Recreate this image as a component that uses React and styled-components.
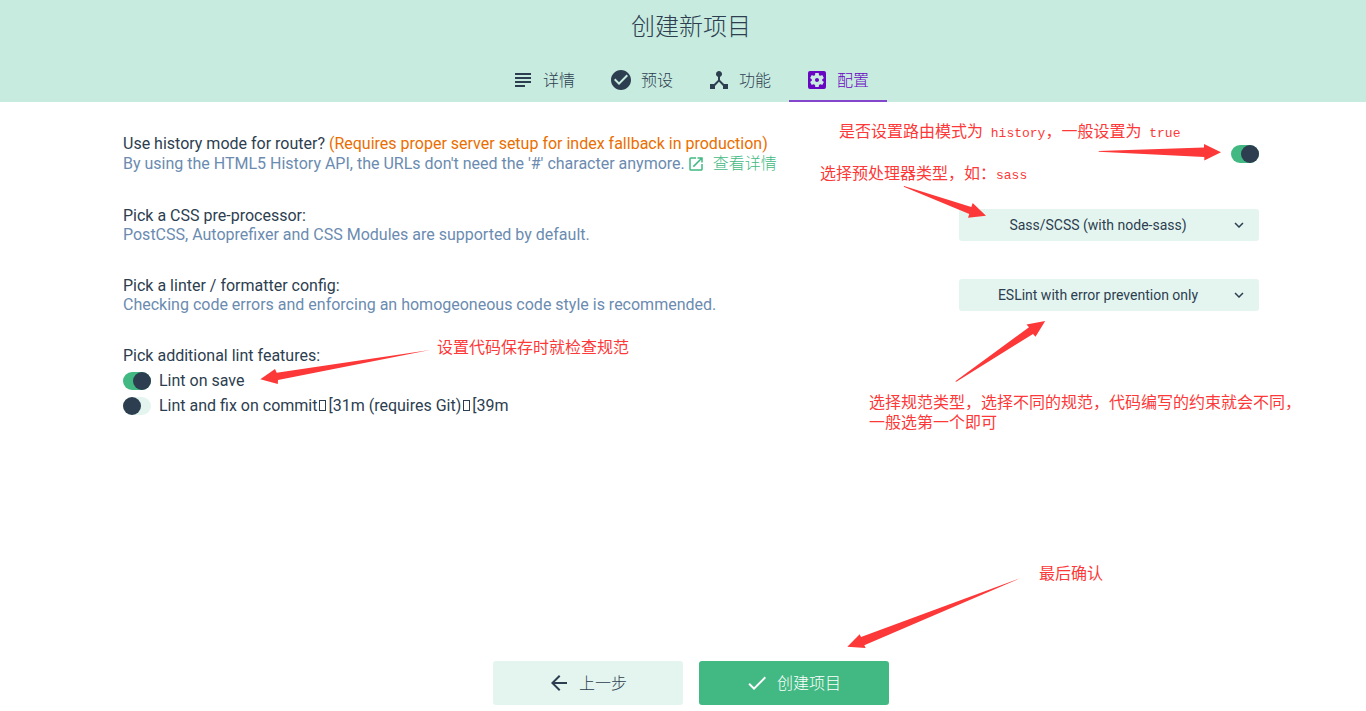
import React, { useState } from "react";
import styled, { createGlobalStyle, css } from "styled-components";
import {
  MdSubject,
  MdCheckCircle,
  MdDeviceHub,
  MdSettingsApplications,
  MdOpenInNew,
  MdKeyboardArrowDown,
  MdArrowBack,
  MdCheck,
} from "react-icons/md";

const color = {
  dark: "#2c3e50",
  green: "#42b983",
  header: "#c8ebdf",
  light: "#e4f5ef",
  blue: "#6b8bb0",
  orange: "#ea6e00",
  purple: "#6806c1",
  underline: "#8447cc",
  red: "#fd3838",
};

const GlobalStyle = createGlobalStyle`
  * { box-sizing: border-box; }
  body {
    margin: 0;
    background: #fff;
    color: ${color.dark};
    font: 400 16px/19px Roboto, "Noto Sans CJK SC", sans-serif;
  }
`;

const Page = styled.div`
  min-height: 100vh;
  display: flex;
  flex-direction: column;
`;

const Header = styled.header`
  background: ${color.header};
  padding-left: 16px;
  display: flex;
  flex-direction: column;
  align-items: center;
`;

const Title = styled.h1`
  margin: 0 0 4px;
  font-size: 24px;
  font-weight: 300;
  line-height: 54px;
`;

const Tabs = styled.nav`
  display: flex;
`;

const Tab = styled.button`
  display: flex;
  align-items: center;
  gap: 8px;
  min-width: 98px;
  height: 44px;
  padding: 0 16px;
  border: 0;
  background: none;
  font: inherit;
  font-weight: 300;
  color: ${color.dark};
  cursor: pointer;

  ${(p) =>
    p.$active &&
    css`
      color: ${color.purple};
      box-shadow: inset 0 -2px ${color.underline};
    `}
`;

const Content = styled.main`
  flex: 1;
  width: 100%;
  padding: 16px 107px 16px 123px;
`;

const Row = styled.section`
  position: relative;
  display: flex;
  align-items: center;
  justify-content: space-between;
  padding: 16px 0;
`;

const Prompt = styled.label`
  display: block;
`;

const Warning = styled.span`
  color: ${color.orange};
`;

const Description = styled.div`
  display: flex;
  align-items: center;
  color: ${color.blue};
`;

const MoreLink = styled.a`
  display: inline-flex;
  align-items: center;
  gap: 8px;
  margin-left: 2px;
  line-height: 21px;
  font-weight: 300;
  color: ${color.green};
  text-decoration: none;
`;

const Switch = styled.input.attrs({ type: "checkbox", role: "switch" })`
  appearance: none;
  flex: none;
  display: flex;
  width: 28px;
  height: 18px;
  margin: 0;
  border-radius: 9px;
  background: ${color.light};
  cursor: pointer;

  &::before {
    content: "";
    width: 18px;
    height: 18px;
    border-radius: 50%;
    background: ${color.dark};
  }

  &:checked {
    justify-content: flex-end;
    background: ${color.green};
  }
`;

const SelectBox = styled.div`
  display: grid;
  align-items: center;
  width: 300px;

  > * {
    grid-area: 1 / 1;
  }

  > svg {
    justify-self: end;
    margin-right: 11px;
    pointer-events: none;
  }
`;

const Select = styled.select`
  appearance: none;
  width: 100%;
  height: 32px;
  padding: 0 32px 0 10px;
  border: 0;
  border-radius: 3px;
  background: ${color.light};
  color: ${color.dark};
  font: 400 14px/32px Roboto, sans-serif;
  text-align: center;
  text-align-last: center;
`;

const Features = styled.fieldset`
  position: relative;
  margin: 0;
  padding: 16px 0;
  border: 0;
`;

const FeaturesTitle = styled.div`
  margin-bottom: 6px;
`;

const Feature = styled.label`
  display: flex;
  align-items: center;
  gap: 8px;
  width: max-content;
  margin-bottom: 6px;
`;

const Tofu = styled.span`
  display: inline-block;
  width: 7px;
  height: 11px;
  margin: 0 2px;
  border: 1px solid ${color.dark};
`;

const Footer = styled.footer`
  display: flex;
  justify-content: center;
  padding: 0 0 6px 16px;
`;

const Actions = styled.div`
  position: relative;
  display: flex;
  gap: 16px;
`;

const Action = styled.button`
  display: flex;
  align-items: center;
  justify-content: center;
  gap: 8px;
  width: 190px;
  height: 44px;
  padding: 0 8px 0 6px;
  border: 0;
  border-radius: 3px;
  font: inherit;
  font-weight: 300;
  background: ${(p) => (p.$primary ? color.green : color.light)};
  color: ${(p) => (p.$primary ? "#fff" : color.dark)};
  cursor: pointer;
`;

const place = css`
  position: absolute;
  top: ${(p) => p.$top}px;
  ${(p) => (p.$left !== undefined ? `left: ${p.$left}px;` : `right: ${p.$right}px;`)}
  pointer-events: none;
`;

const Note = styled.p`
  ${place}
  width: ${(p) => p.$width}px;
  margin: 0;
  line-height: 20px;
  white-space: nowrap;
  color: ${color.red};
`;

const Mono = styled.span`
  font-family: "Liberation Mono", monospace;
  font-size: 13px;
  white-space: pre;
`;

const Arrow = styled.svg`
  ${place}
  fill: ${color.red};
`;

function Dropdown({ id, options }) {
  return (
    <SelectBox>
      <Select id={id}>
        {options.map((o) => (
          <option key={o}>{o}</option>
        ))}
      </Select>
      <MdKeyboardArrowDown size={18} />
    </SelectBox>
  );
}

const tabs = [
  { name: "详情", Icon: MdSubject },
  { name: "预设", Icon: MdCheckCircle },
  { name: "功能", Icon: MdDeviceHub },
  { name: "配置", Icon: MdSettingsApplications },
];

export default function App() {
  const [active, setActive] = useState("配置");

  return (
    <Page>
      <GlobalStyle />
      <Header>
        <Title>创建新项目</Title>
        <Tabs>
          {tabs.map(({ name, Icon }) => (
            <Tab key={name} $active={name === active} onClick={() => setActive(name)}>
              <Icon size={24} />
              {name}
            </Tab>
          ))}
        </Tabs>
      </Header>

      <Content>
        <Row>
          <div>
            <Prompt htmlFor="history">
              Use history mode for router?{" "}
              <Warning>(Requires proper server setup for index fallback in production)</Warning>
            </Prompt>
            <Description>
              By using the HTML5 History API, the URLs don't need the '#' character anymore.
              <MoreLink href="#history">
                <MdOpenInNew size={18} />
                查看详情
              </MoreLink>
            </Description>
          </div>
          <Switch id="history" defaultChecked />
          <Note $top={4} $right={76} $width={344}>
            是否设置路由模式为<Mono> history</Mono>，一般设置为<Mono> true</Mono>
          </Note>
          <Arrow $top={25} $right={37} width="124" height="18" viewBox="1098 143 124 18">
            <path d="M1098.7 151L1204 147.5V144L1221 152.3L1204.3 160.5V157L1098.7 151.8Z" />
          </Arrow>
        </Row>

        <Row>
          <div>
            <Prompt htmlFor="preprocessor">Pick a CSS pre-processor:</Prompt>
            <Description>PostCSS, Autoprefixer and CSS Modules are supported by default.</Description>
          </div>
          <Dropdown id="preprocessor" options={["Sass/SCSS (with node-sass)", "Less", "Stylus"]} />
          <Note $top={-26} $right={231} $width={208}>
            选择预处理器类型，如：<Mono>sass</Mono>
          </Note>
          <Arrow $top={-5} $right={272} width="84" height="34" viewBox="903 185 84 34">
            <path d="M904 186L971.3 207L972.7 203L986 215.7L968 217.8L969.3 214L903.7 186.7Z" />
          </Arrow>
        </Row>

        <Row>
          <div>
            <Prompt htmlFor="linter">Pick a linter / formatter config:</Prompt>
            <Description>
              Checking code errors and enforcing an homogeoneous code style is recommended.
            </Description>
          </div>
          <Dropdown id="linter" options={["ESLint with error prevention only", "ESLint + Prettier"]} />
          <Arrow $top={60} $right={213} width="91" height="63" viewBox="955 320 91 63">
            <path d="M955.3 381.2L1029 327.3L1026.5 324.5L1045.2 321L1035.5 336.7L1033 334L956.3 381.8Z" />
          </Arrow>
          <Note $top={133} $right={-42} $width={432}>
            选择规范类型，选择不同的规范，代码编写的约束就会不同，
            <br />
            一般选第一个即可
          </Note>
        </Row>

        <Features aria-labelledby="lint-features">
          <FeaturesTitle id="lint-features">Pick additional lint features:</FeaturesTitle>
          <Feature>
            <Switch defaultChecked />
            Lint on save
          </Feature>
          <Feature>
            <Switch />
            <span>
              Lint and fix on commit
              <Tofu />
              [31m (requires Git)
              <Tofu />
              [39m
            </span>
          </Feature>
          <Arrow $top={19} $left={137} width="171" height="36" viewBox="260 349 171 36">
            <path d="M430 350L276.7 372.7L275 369L260.3 379.3L277.8 384L278 380Z" />
          </Arrow>
          <Note $top={8} $left={314} $width={192}>
            设置代码保存时就检查规范
          </Note>
        </Features>
      </Content>

      <Footer>
        <Actions>
          <Action>
            <MdArrowBack size={24} />
            上一步
          </Action>
          <Action $primary>
            <MdCheck size={24} />
            创建项目
          </Action>
          <Arrow $top={-83} $left={354} width="174" height="71" viewBox="847 578 174 71">
            <path d="M1020 578.3L861 637L859.7 634.3L847.3 646.7L865.7 648L864.3 645.2Z" />
          </Arrow>
          <Note $top={-97} $left={546} $width={64}>
            最后确认
          </Note>
        </Actions>
      </Footer>
    </Page>
  );
}
